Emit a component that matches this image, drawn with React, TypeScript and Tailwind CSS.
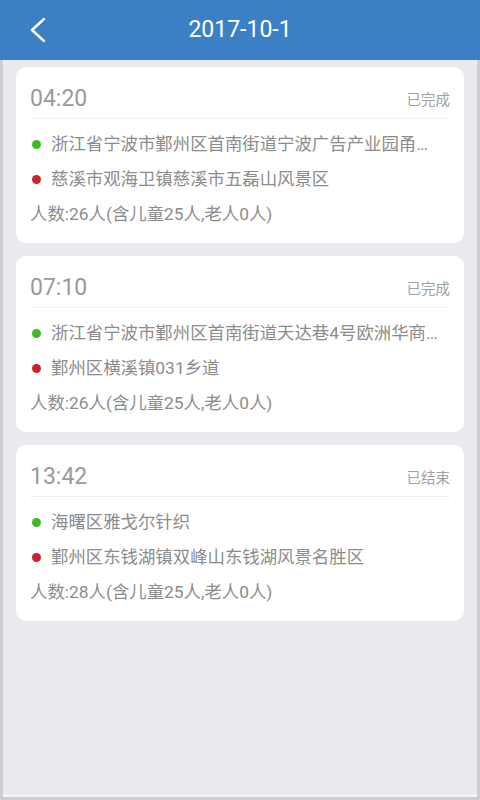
type Trip = {
  time: string;
  status: string;
  from: string;
  to: string;
  count: string;
};

const trips: Trip[] = [
  {
    time: "04:20",
    status: "已完成",
    from: "浙江省宁波市鄞州区首南街道宁波广告产业园甬新路88号",
    to: "慈溪市观海卫镇慈溪市五磊山风景区",
    count: "人数:26人(含儿童25人,老人0人)",
  },
  {
    time: "07:10",
    status: "已完成",
    from: "浙江省宁波市鄞州区首南街道天达巷4号欧洲华商城A座",
    to: "鄞州区横溪镇031乡道",
    count: "人数:26人(含儿童25人,老人0人)",
  },
  {
    time: "13:42",
    status: "已结束",
    from: "海曙区雅戈尔针织",
    to: "鄞州区东钱湖镇双峰山东钱湖风景名胜区",
    count: "人数:28人(含儿童25人,老人0人)",
  },
];

function TripCard({ trip }: { trip: Trip }) {
  return (
    <div className="bg-white rounded-[10px] px-[14px] pt-[12px] pb-[11px]">
      <div className="h-[40px] flex items-center justify-between border-b border-[#efefef]">
        <span className="text-[23px] text-[#9a9a9a] leading-none">{trip.time}</span>
        <span className="text-[14.5px] text-[#a0a0a0] mt-[4px]">{trip.status}</span>
      </div>
      <div className="pt-[8px]">
        <div className="h-[35px] flex items-center gap-[10px] pl-[2px]">
          <span className="w-[9px] h-[9px] rounded-full bg-[#3dbb25] shrink-0" />
          <span className="text-[17.4px] text-[#8c8c8c] truncate pr-[12px]">{trip.from}</span>
        </div>
        <div className="h-[35px] flex items-center gap-[10px] pl-[2px]">
          <span className="w-[9px] h-[9px] rounded-full bg-[#cc2229] shrink-0" />
          <span className="text-[17.4px] text-[#8c8c8c] truncate pr-[12px]">{trip.to}</span>
        </div>
        <div className="h-[35px] flex items-center">
          <span className="text-[17.4px] text-[#8c8c8c]">{trip.count}</span>
        </div>
      </div>
    </div>
  );
}

function App() {
  return (
    <div
      className="h-[800px] w-[480px] bg-[#cfcfd2] pl-[3px] pr-[3px] pb-[3px] flex flex-col"
      style={{ fontFamily: '"Roboto", "Noto Sans CJK SC", sans-serif' }}
    >
      <div className="h-[60px] bg-[#3b80c5] flex items-center relative shrink-0 -mx-[3px]">
        <svg className="ml-[29px]" width="18" height="28" viewBox="0 0 18 28" fill="none">
          <polyline
            points="15,3 3,14 15,25"
            stroke="white"
            strokeWidth="2.4"
            strokeLinecap="round"
            strokeLinejoin="round"
          />
        </svg>
        <h1 className="absolute left-0 right-0 text-center text-white text-[23px] pointer-events-none">
          2017-10-1
        </h1>
      </div>
      <div className="flex-1 bg-[#ebeaf1] border-b-[2px] border-[#f4f4f6] px-[13px] pt-[7px] flex flex-col gap-[13px]">
        {trips.map((t) => (
          <TripCard key={t.time} trip={t} />
        ))}
      </div>
    </div>
  );
}

export default App;
